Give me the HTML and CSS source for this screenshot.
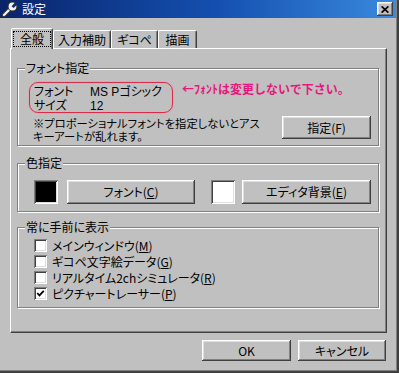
FILE: index.html
```html
<!DOCTYPE html>
<html lang="ja">
<head>
<meta charset="utf-8">
<title>設定</title>
<link rel="stylesheet" href="styles.css">
</head>
<body>
<div class="window">
  <div class="titlebar">
    <svg class="ticon" width="16" height="16" viewBox="0 0 16 16">
      <path d="M2 14 L8.5 7.5" stroke="#303030" stroke-width="4.5" stroke-linecap="round"/>
      <path d="M2 14 L8.5 7.5" stroke="#f2f2f2" stroke-width="2.4" stroke-linecap="round"/>
      <circle cx="10.5" cy="5.5" r="5" fill="#303030"/>
      <circle cx="10.5" cy="5.5" r="3.9" fill="#f2f2f2"/>
      <path d="M9.6 5.2 L13.8 0.6 L16 2.8 L11.6 6.9 Z" fill="#0d2a72"/>
    </svg>
    <span class="title">設定</span>
    <button class="close" type="button" aria-label="閉じる">
      <svg width="8" height="7" viewBox="0 0 8 7"><path d="M0.6 0.4 L7.4 6.6 M7.4 0.4 L0.6 6.6" stroke="#000" stroke-width="1.7"/></svg>
    </button>
  </div>

  <div class="tabs">
    <div class="tab sel w1"><span class="focus">全般</span></div>
    <div class="tab w2">入力補助</div>
    <div class="tab w3">ギコペ</div>
    <div class="tab w4">描画</div>
  </div>

  <div class="panel">
    <div class="group g1">
      <div class="legend">フォント指定</div>
      <div class="frow">
        <div class="fontbox">
          <div class="r"><span class="k">フォント</span><span>MS Pゴシック</span></div>
          <div class="r"><span class="k">サイズ</span><span>12</span></div>
        </div>
        <div class="note">←ﾌｫﾝﾄは変更しないで下さい。</div>
      </div>
      <div class="wrow">
        <div class="warn">※プロポーショナルフォントを指定しないとアス<br>キーアートが乱れます。</div>
        <button class="btn b-font" type="button">指定(F)</button>
      </div>
    </div>

    <div class="group g2">
      <div class="legend">色指定</div>
      <div class="crow">
        <div class="swatch black"></div>
        <button class="btn b-c1" type="button">フォント(<u>C</u>)</button>
        <div class="swatch white"></div>
        <button class="btn b-c2" type="button">エディタ背景(<u>E</u>)</button>
      </div>
    </div>

    <div class="group g3">
      <div class="legend">常に手前に表示</div>
      <div class="list">
        <div class="cbrow"><span class="cb"></span><span class="cbl">メインウィンドウ(<u>M</u>)</span></div>
        <div class="cbrow"><span class="cb"></span><span class="cbl">ギコペ文字絵データ(<u>G</u>)</span></div>
        <div class="cbrow"><span class="cb"></span><span class="cbl">リアルタイム2chシミュレータ(<u>R</u>)</span></div>
        <div class="cbrow"><span class="cb"><svg width="9" height="9" viewBox="0 0 9 9"><path d="M1.2 4 L3.4 6.4 L7.8 1.8" stroke="#000" stroke-width="1.8" fill="none"/></svg></span><span class="cbl">ピクチャートレーサー(<u>P</u>)</span></div>
      </div>
    </div>
  </div>

  <div class="footer">
    <button class="btn b-ok" type="button">OK</button>
    <button class="btn b-cancel" type="button">キャンセル</button>
  </div>
</div>
</body>
</html>
```
FILE: styles.css
```css
* { box-sizing: border-box; }
html, body { margin: 0; padding: 0; }
body {
  font-family: "Noto Sans CJK JP", "Noto Sans", sans-serif;
  font-size: 12px;
  line-height: 14px;
  font-feature-settings: "palt";
  color: #000;
  background: #c0c0c0;
}
u { text-decoration: underline; text-underline-offset: 1px; }

.window {
  width: 399px;
  height: 373px;
  background: #c0c0c0;
  box-shadow: inset -2px -2px 0 #404040, inset -3px -3px 0 #808080;
  overflow: hidden;
}

.titlebar {
  height: 18px;
  width: 396px;
  display: flex;
  align-items: center;
  background: linear-gradient(90deg, #0a246a 0%, #1450b0 55%, #3a8ade 100%);
  color: #fff;
}
.ticon { margin-left: 2px; flex: none; }
.title { margin-left: 4px; line-height: 16px; font-size: 12px; }
.close {
  margin-left: auto;
  margin-right: 3px;
  width: 16px;
  height: 14px;
  border: 0;
  padding: 0;
  background: #c0c0c0;
  display: flex;
  align-items: center;
  justify-content: center;
  box-shadow: inset -1px -1px #404040, inset 1px 1px #fff, inset -2px -2px #808080, inset 2px 2px #dfdfdf;
}

.tabs {
  display: flex;
  align-items: flex-end;
  height: 20px;
  margin-top: 10px;
  padding-left: 11px;
}
.tab {
  height: 18px;
  display: flex;
  align-items: center;
  justify-content: center;
  background: #c0c0c0;
  border-top: 1px solid #fff;
  border-left: 1px solid #fff;
  border-right: 1px solid #404040;
  border-radius: 2px 2px 0 0;
  box-shadow: inset -1px 0 #808080;
  white-space: nowrap;
}
.tab.sel {
  height: 21px;
  margin-bottom: -1px;
  padding-bottom: 1px;
  align-items: flex-start;
  position: relative;
  z-index: 1;
}
.focus {
  flex: 1;
  margin: 2px 1px 0 1px;
  height: 16px;
  border: 1px dotted #000;
  text-align: center;
  line-height: 14px;
}
.w1 { width: 42px; }
.w2 { width: 58px; }
.w3 { width: 47px; }
.w4 { width: 39px; }

.panel {
  margin-left: 10px;
  width: 377px;
  height: 285px;
  border: 1px solid;
  border-color: #fff #404040 #404040 #fff;
  box-shadow: inset -1px -1px #808080;
  padding-left: 6px;
}

.group {
  width: 362px;
  border: 1px solid #808080;
  box-shadow: inset 1px 1px #fff, 1px 1px #fff;
}
.g1 { margin-top: 19px; height: 78px; }
.g2 { margin-top: 17px; height: 49px; }
.g3 { margin-top: 15px; height: 81px; }

.legend {
  width: max-content;
  margin: -8px 0 0 7px;
  padding: 0 1px;
  background: #c0c0c0;
  line-height: 14px;
}

.frow { display: flex; align-items: flex-start; margin-top: 7px; }
.fontbox {
  margin-left: 11px;
  width: 144px;
  height: 31px;
  border: 1px solid #dc2a4a;
  border-radius: 9px;
  box-shadow: 0 0 0 1px rgba(240, 150, 170, 0.55);
  padding: 2px 0 0 4px;
  font-family: "Liberation Sans", "Noto Sans CJK JP", sans-serif;
}
.r { display: flex; line-height: 14px; }
.k { width: 56px; flex: none; }
.note {
  margin-left: 9px;
  color: #e8177e;
  font-weight: bold;
  line-height: 14px;
  white-space: nowrap;
  font-feature-settings: normal;
}

.wrow { display: flex; align-items: flex-start; margin-top: 3px; }
.warn {
  margin: 2px 0 0 15px;
  font-family: "Liberation Sans", "Noto Sans CJK JP", sans-serif;
  font-size: 11.3px;
  line-height: 13px;
  white-space: nowrap;
}

.btn {
  border: 0;
  padding: 0;
  font: inherit;
  font-feature-settings: "palt";
  color: #000;
  background: #c0c0c0;
  box-shadow: inset -1px -1px #404040, inset 1px 1px #fff, inset -2px -2px #808080, inset 2px 2px #dfdfdf;
  white-space: nowrap;
}
.b-font { width: 89px; height: 23px; margin-left: auto; margin-right: 7px; }

.crow { display: flex; align-items: flex-start; margin-top: 10px; }
.swatch {
  width: 24px;
  height: 24px;
  flex: none;
  box-shadow: inset 1px 1px #808080, inset -1px -1px #fff, inset 2px 2px #404040, inset -2px -2px #dfdfdf;
}
.swatch.black { margin-left: 16px; background: #000; }
.swatch.white { margin-left: 16px; background: #fff; }
.b-c1 { width: 128px; height: 24px; margin-left: 9px; }
.b-c2 { width: 129px; height: 24px; margin-left: 7px; }

.list { margin-top: 5px; }
.cbrow { display: flex; align-items: flex-start; height: 16px; }
.cb {
  width: 13px;
  height: 13px;
  flex: none;
  margin-left: 16px;
  background: #fff;
  display: flex;
  align-items: center;
  justify-content: center;
  box-shadow: inset 1px 1px #808080, inset -1px -1px #fff, inset 2px 2px #404040, inset -2px -2px #dfdfdf;
}
.cbl { margin-left: 5px; line-height: 13px; white-space: nowrap; }

.footer {
  display: flex;
  justify-content: flex-end;
  gap: 7px;
  margin-top: 7px;
  padding-right: 13px;
}
.b-ok { width: 89px; height: 21px; }
.b-cancel { width: 88px; height: 21px; }
```
